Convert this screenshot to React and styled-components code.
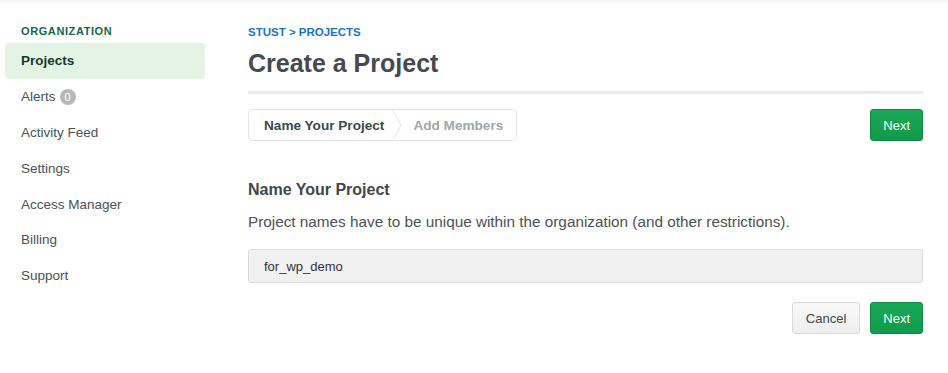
import React, { useState } from 'react';
import styled, { createGlobalStyle } from 'styled-components';

const GlobalStyle = createGlobalStyle`
  html, body {
    margin: 0;
    padding: 0;
    background: #fff;
    font-family: "Liberation Sans", Arial, sans-serif;
  }
`;

const Page = styled.div`
  position: relative;
  display: flex;
  width: 948px;
  height: 373px;
  overflow: hidden;
  background: #fff;

  &::before {
    content: '';
    position: absolute;
    left: 0;
    right: 0;
    top: 0;
    height: 6px;
    background: linear-gradient(#f3f4f6, rgba(255, 255, 255, 0));
  }
`;

const Sidebar = styled.nav`
  width: 200px;
  padding: 24px 0 0 5px;
  flex-shrink: 0;
`;

const SectionLabel = styled.div`
  padding-left: 16px;
  font-size: 11px;
  font-weight: bold;
  letter-spacing: 0.6px;
  color: #13684a;
  line-height: 14px;
  margin-bottom: 4px;
`;

const NavList = styled.div`
  display: flex;
  flex-direction: column;
  padding-top: 1px;
`;

const NavItem = styled.a`
  display: flex;
  align-items: center;
  height: 35.8px;
  padding-left: 16px;
  border-radius: 4px;
  font-size: 13.5px;
  text-decoration: none;
  color: ${(p) => (p.active ? '#133a2c' : '#4a5257')};
  font-weight: ${(p) => (p.active ? 'bold' : 'normal')};
  background: ${(p) => (p.active ? '#e4f4e4' : 'transparent')};
`;

const Count = styled.span`
  display: inline-flex;
  align-items: center;
  justify-content: center;
  width: 16px;
  height: 16px;
  margin-left: 4px;
  border-radius: 50%;
  background: #b8b8b8;
  color: #fff;
  font-size: 11px;
`;

const Main = styled.main`
  flex: 1;
  padding: 25px 25px 0 43px;
`;

const Crumb = styled.div`
  font-size: 11.5px;
  font-weight: bold;
  color: #1a74c4;
  line-height: 14px;
`;

const Title = styled.h1`
  margin: 7px 0 0;
  font-size: 25px;
  font-weight: bold;
  color: #444a4f;
  line-height: 34px;
  padding-bottom: 11px;
  border-bottom: 3px solid #e8edeb;
`;

const StepRow = styled.div`
  display: flex;
  justify-content: space-between;
  align-items: center;
  margin-top: 15px;
`;

const Steps = styled.div`
  display: flex;
  height: 30px;
  border: 1px solid #e3e6e5;
  border-radius: 4px;
`;

const Step = styled.div`
  display: flex;
  align-items: center;
  padding: ${(p) => (p.first ? '0 8px 0 15px' : '0 13px 0 11px')};
  font-size: 13.6px;
  font-weight: bold;
  color: ${(p) => (p.current ? '#40474c' : '#a3a6a8')};
`;

const Chevron = styled.svg`
  width: 10px;
  height: 30px;
  flex-shrink: 0;
`;

const Button = styled.button`
  height: 32px;
  padding: 0 ${(p) => (p.wide ? '13px' : '12px')};
  border-radius: 3px;
  font-family: "Liberation Sans", Arial, sans-serif;
  font-size: 13px;
  cursor: pointer;
  border: 1px solid ${(p) => (p.primary ? '#0f8a43' : '#dadada')};
  background: ${(p) =>
    p.primary ? 'linear-gradient(#18a957, #119a4b)' : 'linear-gradient(#f9f9f9, #eeeeee)'};
  color: ${(p) => (p.primary ? '#fff' : '#40474c')};
`;

const SubTitle = styled.h2`
  margin: 39px 0 0;
  font-size: 16px;
  font-weight: bold;
  color: #40474c;
  line-height: 20px;
`;

const Help = styled.p`
  margin: 12px 0 0;
  font-size: 15.3px;
  color: #4a5257;
  line-height: 20px;
`;

const NameInput = styled.input`
  display: block;
  box-sizing: border-box;
  width: 100%;
  height: 34px;
  margin-top: 17px;
  padding: 0 15px;
  border: 1px solid #dcdcdc;
  border-radius: 3px;
  background: #f1f1f1;
  font-family: "Liberation Sans", Arial, sans-serif;
  font-size: 13px;
  color: #333;
  outline: none;
`;

const Actions = styled.div`
  display: flex;
  justify-content: flex-end;
  gap: 10px;
  margin-top: 19px;
`;

const navItems = ['Projects', 'Alerts', 'Activity Feed', 'Settings', 'Access Manager', 'Billing', 'Support'];

export default function App() {
  const [name, setName] = useState('for_wp_demo');

  return (
    <Page>
      <GlobalStyle />
      <Sidebar>
        <SectionLabel>ORGANIZATION</SectionLabel>
        <NavList>
          {navItems.map((item) => (
            <NavItem key={item} active={item === 'Projects'}>
              {item}
              {item === 'Alerts' && <Count>0</Count>}
            </NavItem>
          ))}
        </NavList>
      </Sidebar>
      <Main>
        <Crumb>STUST &gt; PROJECTS</Crumb>
        <Title>Create a Project</Title>
        <StepRow>
          <Steps>
            <Step first current>Name Your Project</Step>
            <Chevron viewBox="0 0 10 30">
              <path d="M1 0 L9 15 L1 30" fill="none" stroke="#e3e6e5" strokeWidth="1" />
            </Chevron>
            <Step>Add Members</Step>
          </Steps>
          <Button primary>Next</Button>
        </StepRow>
        <SubTitle>Name Your Project</SubTitle>
        <Help>Project names have to be unique within the organization (and other restrictions).</Help>
        <NameInput value={name} onChange={(e) => setName(e.target.value)} />
        <Actions>
          <Button wide>Cancel</Button>
          <Button primary>Next</Button>
        </Actions>
      </Main>
    </Page>
  );
}
